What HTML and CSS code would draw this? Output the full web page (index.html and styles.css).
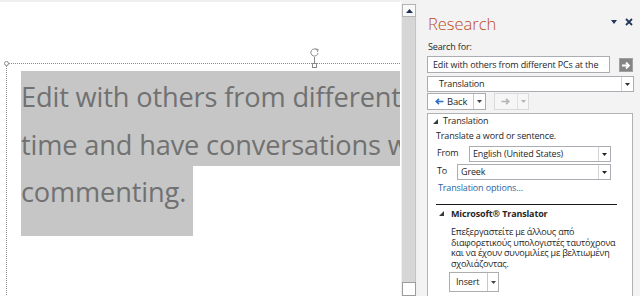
FILE: index.html
```html
<!DOCTYPE html>
<html>
<head>
<meta charset="utf-8">
<link rel="stylesheet" href="styles.css">
</head>
<body>
<div class="app">
  <div class="doc">
    <div class="frame">
      <span class="h-tl"></span>
      <span class="rot">
        <svg width="11" height="22" viewBox="0 0 11 22">
          <path d="M8.2 3.2 A3.6 3.6 0 1 0 9 6" fill="none" stroke="#8a8a8a" stroke-width="1"/>
          <path d="M6.6 1.8 L9.2 2.6 L8.4 5" fill="none" stroke="#8a8a8a" stroke-width="1"/>
          <line x1="5.5" y1="10" x2="5.5" y2="17" stroke="#8a8a8a" stroke-width="1"/>
          <rect x="3.5" y="16.5" width="4" height="4" fill="#fff" stroke="#8a8a8a" stroke-width="1"/>
        </svg>
      </span>
      <div class="sel">
        <div class="ln">Edit with others from different PCs at the same</div>
        <div class="ln">time and have conversations with improved</div>
        <div class="ln last">commenting.</div>
      </div>
    </div>
  </div>
  <div class="vscroll">
    <div class="sb-up">
      <svg width="7" height="4" viewBox="0 0 7 4"><polygon points="3.5,0 7,4 0,4" fill="#1f2f4f"/></svg>
    </div>
    <div class="sb-thumb"></div>
    <div class="sb-down"></div>
  </div>
  <div class="pane">
    <div class="ph">
      <span class="title">Research</span>
      <span class="ctrls">
        <svg width="6" height="4" viewBox="0 0 6 4"><polygon points="0,0 6,0 3,4" fill="#23375a"/></svg>
        <svg width="8" height="8" viewBox="0 0 8 8"><path d="M1 1 L7 7 M7 1 L1 7" stroke="#23375a" stroke-width="1.8"/></svg>
      </span>
    </div>
    <div class="lbl">Search for:</div>
    <div class="srow">
      <div class="input">Edit with others from different PCs at the</div>
      <div class="go">
        <svg width="10" height="9" viewBox="0 0 10 9"><path d="M1 4.5 H7.5 M5 1.5 L8 4.5 L5 7.5" fill="none" stroke="#fff" stroke-width="1.8"/></svg>
      </div>
    </div>
    <div class="combo">
      <span class="ctext">Translation</span>
      <span class="dd"><svg width="5" height="3" viewBox="0 0 5 3"><polygon points="0,0 5,0 2.5,3" fill="#333"/></svg></span>
    </div>
    <div class="nav">
      <div class="btn back">
        <span class="bmain">
          <svg width="9" height="7" viewBox="0 0 9 7"><path d="M8.5 3.5 H1.5 M4 0.8 L1.2 3.5 L4 6.2" fill="none" stroke="#2f72c4" stroke-width="1.6"/></svg>
          <span class="btxt">Back</span>
        </span>
        <span class="bdd"><svg width="5" height="3" viewBox="0 0 5 3"><polygon points="0,0 5,0 2.5,3" fill="#444"/></svg></span>
      </div>
      <div class="btn fwd">
        <span class="fmain">
          <svg width="9" height="7" viewBox="0 0 9 7"><path d="M0.5 3.5 H7.5 M5 0.8 L7.8 3.5 L5 6.2" fill="none" stroke="#b4b4b4" stroke-width="1.6"/></svg>
        </span>
        <span class="fdd"><svg width="5" height="3" viewBox="0 0 5 3"><polygon points="0,0 5,0 2.5,3" fill="#b4b4b4"/></svg></span>
      </div>
    </div>
    <div class="box">
      <div class="sec">
        <svg class="tri" width="5" height="5" viewBox="0 0 5 5"><polygon points="5,0 5,5 0,5" fill="#3a3a3a"/></svg>
        <span>Translation</span>
      </div>
      <div class="desc">Translate a word or sentence.</div>
      <div class="frow">
        <span class="flbl from">From</span>
        <div class="select wfrom"><span class="stext">English (United States)</span><span class="sdd"><svg width="5" height="3" viewBox="0 0 5 3"><polygon points="0,0 5,0 2.5,3" fill="#222"/></svg></span></div>
      </div>
      <div class="frow">
        <span class="flbl to">To</span>
        <div class="select wto"><span class="stext">Greek</span><span class="sdd"><svg width="5" height="3" viewBox="0 0 5 3"><polygon points="0,0 5,0 2.5,3" fill="#222"/></svg></span></div>
      </div>
      <div class="link">Translation options...</div>
      <div class="rule"></div>
      <div class="sec2">
        <svg class="tri" width="5" height="5" viewBox="0 0 5 5"><polygon points="5,0 5,5 0,5" fill="#3a3a3a"/></svg>
        <span>Microsoft® Translator</span>
      </div>
      <div class="greek">Επεξεργαστείτε με άλλους από<br>διαφορετικούς υπολογιστές ταυτόχρονα<br>και να έχουν συνομιλίες με βελτιωμένη<br>σχολιάζοντας.</div>
      <div class="insert">
        <span class="itxt">Insert</span>
        <span class="idd"><svg width="5" height="3" viewBox="0 0 5 3"><polygon points="0,0 5,0 2.5,3" fill="#444"/></svg></span>
      </div>
    </div>
  </div>
</div>
</body>
</html>
```

FILE: styles.css
```css
* { box-sizing: border-box; }
html, body { margin: 0; padding: 0; }
body {
  width: 640px;
  height: 296px;
  overflow: hidden;
  background: #fff;
  font-family: "Open Sans", "Noto Sans", sans-serif;
  font-size: 9px;
  letter-spacing: -0.15px;
  color: #262626;
}
.app { display: flex; height: 296px; }

/* document */
.doc {
  width: 401px;
  height: 296px;
  overflow: hidden;
  background: #fff;
  border-top: 2px solid #f0f0f0;
  border-right: 1px solid #fff;
  flex: none;
}
.frame {
  position: relative;
  margin: 61px 0 0 6px;
  width: 700px;
  height: 300px;
  border-top: 1px dotted #8a8a8a;
  border-left: 1px dotted #8a8a8a;
  padding: 7px 0 0 14px;
}
.h-tl {
  position: absolute;
  left: -3px;
  top: -3px;
  width: 5px;
  height: 5px;
  border: 1px solid #8a8a8a;
  border-radius: 50%;
  background: #fff;
}
.rot {
  position: absolute;
  left: 302px;
  top: -17px;
  width: 11px;
  height: 22px;
}
.rot svg { display: block; }
.sel .ln {
  font-size: 27.2px;
  letter-spacing: -0.15px;
  line-height: 43.5px;
  padding-top: 4px;
  color: #717171;
  background: #c6c6c6;
  white-space: nowrap;
}
.sel .ln.last { width: 172px; height: 70px; }

/* scrollbar */
.vscroll {
  width: 17px;
  flex: none;
  background: #f0f0f0;
  display: flex;
  flex-direction: column;
  padding: 4px 2px 0 1px;
}
.sb-up {
  height: 13px;
  border: 1px solid #b4b4b4;
  background: #f8f8f8;
  display: flex;
  align-items: center;
  justify-content: center;
}
.sb-thumb {
  flex: 1;
  background: #d6d6d6;
  border-right: 1px solid #c4c4c4;
}
.sb-down {
  height: 14px;
  border: 1px solid #9c9c9c;
  background: #fff;
}

/* pane */
.pane {
  width: 222px;
  flex: none;
  background: #f3f3f3;
  padding-left: 9px;
}
.ph { display: flex; height: 38px; }
.title {
  font-size: 16.5px;
  font-weight: 300;
  letter-spacing: 0;
  line-height: 20px;
  padding-top: 14px;
  padding-left: 1px;
  color: #b94c1c;
}
.ctrls {
  margin-left: auto;
  display: flex;
  align-items: center;
  gap: 8px;
  height: 8px;
  margin-top: 18px;
  margin-right: 7px;
}
.ctrls svg { display: block; }
.lbl { height: 18px; padding: 2px 0 0 1px; line-height: 14px; }
.srow { display: flex; height: 17px; }
.input {
  width: 183px;
  height: 17px;
  border: 1px solid #abadb3;
  background: #fff;
  padding-left: 5px;
  line-height: 15px;
  white-space: nowrap;
  overflow: hidden;
}
.go {
  margin: 2px 0 0 9px;
  width: 14px;
  height: 14px;
  background: #858585;
  border: 1px solid #a0a0a0;
  display: flex;
  align-items: center;
  justify-content: center;
}
.go svg, .combo svg, .btn svg, .select svg, .insert svg, .tri { display: block; }
.combo {
  margin-top: 3px;
  width: 207px;
  height: 16px;
  border: 1px solid #abadb3;
  background: #fff;
  display: flex;
}
.ctext { flex: 1; padding-left: 11px; line-height: 13px; }
.dd {
  width: 12px;
  border-left: 1px solid #d4d4d4;
  display: flex;
  align-items: center;
  justify-content: center;
}
.nav { display: flex; margin-top: 1px; height: 17px; }
.btn { display: flex; height: 17px; border: 1px solid #acacac; background: #fff; }
.back { width: 59px; }
.bmain { width: 45px; display: flex; align-items: center; padding-left: 7px; gap: 3px; }
.btxt { line-height: 14px; font-size: 9.5px; }
.bdd, .fdd {
  flex: 1;
  border-left: 1px solid #c8c8c8;
  display: flex;
  align-items: center;
  justify-content: center;
}
.fwd { width: 35px; margin-left: 8px; border-color: #dadada; background: #f6f6f6; }
.fmain { width: 22px; display: flex; align-items: center; padding-left: 6px; }
.fdd { border-left-color: #e0e0e0; }

.box {
  margin-top: 3px;
  width: 206px;
  height: 200px;
  border: 1px solid #b2b2b2;
  background: #fff;
}
.sec { display: flex; align-items: center; height: 14px; padding-left: 5px; gap: 5px; line-height: 14px; }
.desc { height: 16px; padding: 1px 0 0 8px; line-height: 14px; }
.frow { display: flex; margin-top: 2px; height: 16px; }
.flbl { padding-left: 9px; line-height: 14px; }
.flbl.from { width: 41px; }
.flbl.to { width: 29px; }
.select {
  display: flex;
  height: 16px;
  border: 1px solid #abadb3;
  background: #fff;
}
.wfrom { width: 142px; }
.wto { width: 154px; }
.stext { flex: 1; padding-left: 3px; line-height: 13px; }
.sdd {
  width: 12px;
  border-left: 1px solid #d4d4d4;
  display: flex;
  align-items: center;
  justify-content: center;
}
.link { margin-top: 1px; height: 14px; line-height: 14px; padding-left: 10px; color: #2d5f9e; }
.rule { margin: 9px 0 0 8px; width: 181px; height: 1px; background: #1a1a1a; }
.sec2 {
  display: flex;
  align-items: center;
  height: 16px;
  padding: 1px 0 0 11px;
  gap: 7px;
  font-weight: 700;
  line-height: 14px;
}
.greek {
  margin-top: 6px;
  padding-left: 23px;
  font-size: 9px;
  letter-spacing: -0.2px;
  line-height: 10.6px;
  white-space: nowrap;
}
.insert {
  display: flex;
  margin: 3px 0 0 21px;
  width: 50px;
  height: 20px;
  border: 1px solid #adadad;
  background: #fff;
}
.itxt { width: 37px; padding-left: 6px; line-height: 16px; padding-top: 1px; }
.idd {
  flex: 1;
  border-left: 1px solid #c8c8c8;
  display: flex;
  align-items: center;
  justify-content: center;
}
```
